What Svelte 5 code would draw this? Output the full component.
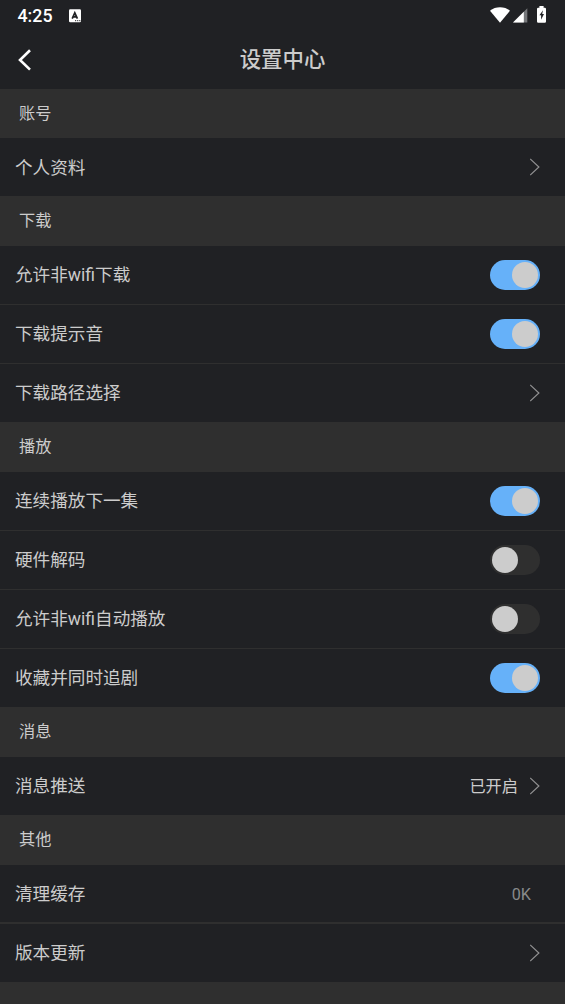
<script lang="ts">
	type Item = { label: string; on?: boolean; value?: string; link?: boolean };
	type Group = { title: string; items: Item[] };

	let groups: Group[] = $state([
		{ title: '账号', items: [{ label: '个人资料', link: true }] },
		{
			title: '下载',
			items: [
				{ label: '允许非wifi下载', on: true },
				{ label: '下载提示音', on: true },
				{ label: '下载路径选择', link: true }
			]
		},
		{
			title: '播放',
			items: [
				{ label: '连续播放下一集', on: true },
				{ label: '硬件解码', on: false },
				{ label: '允许非wifi自动播放', on: false },
				{ label: '收藏并同时追剧', on: true }
			]
		},
		{ title: '消息', items: [{ label: '消息推送', value: '已开启', link: true }] },
		{
			title: '其他',
			items: [
				{ label: '清理缓存', value: '0K' },
				{ label: '版本更新', link: true }
			]
		}
	]);
</script>

<main>
	<div class="status">
		<span class="time">4:25</span>
		<svg class="notice" width="13" height="14" viewBox="0 0 13 14">
			<rect x="0" y="0.3" width="12" height="13" rx="1.2" fill="#fff" />
			<path d="M3.2 9.6 5.8 3.8 8.4 9.6M4.2 7.8h3.2" fill="none" stroke="#202124" stroke-width="1.7" />
			<path d="M6 11.7h1.2M8.1 11.7h1.2M10.2 11.7h1.2" stroke="#202124" stroke-width="1" />
		</svg>
		<div class="signals">
			<svg width="20" height="16" viewBox="0 0 20 16">
				<path d="M0 3.7C5.6-.8 14.4-.8 20 3.7L10 15.8Z" fill="#fff" />
			</svg>
			<svg class="cell" width="15" height="15" viewBox="0 0 15 15">
				<path d="M0 14.5 14.3.3V14.5Z" fill="#75777a" />
				<path d="M0 14.5 10.8 3.8V14.5Z" fill="#fff" />
			</svg>
			<svg class="battery" width="9" height="17" viewBox="0 0 9 17">
				<path d="M2.4 0h4.2v1.8h1.2q1.2 0 1.2 1.2v12.5q0 1.2-1.2 1.2H1.2Q0 16.7 0 15.5V3Q0 1.8 1.2 1.8h1.2Z" fill="#fff" />
				<path d="M6 4.3 2.4 9.2h1.7v4.6L7 8H5.2Z" fill="#202124" />
			</svg>
		</div>
	</div>

	<header>
		<button class="back" aria-label="返回">
			<svg width="14" height="22" viewBox="0 0 14 22">
				<path d="M12 1.3 2 11l10 9.6" fill="none" stroke="#fff" stroke-width="2.6" />
			</svg>
		</button>
		<h1>设置中心</h1>
	</header>

	{#each groups as group}
		<h2>{group.title}</h2>
		<div class="group">
			{#each group.items as item}
				<div class="row">
					<span class="label">{item.label}</span>
					{#if item.value}
						<span class="value" class:muted={!item.link}>{item.value}</span>
					{/if}
					{#if item.link}
						<svg class="arrow" width="10" height="18" viewBox="0 0 10 18">
							<path d="M.2 1 8.9 9 .2 17" fill="none" stroke="#929293" stroke-width="1.15" />
						</svg>
					{:else if item.on !== undefined}
						<button
							class="switch"
							class:on={item.on}
							aria-label={item.label}
							onclick={() => (item.on = !item.on)}
						></button>
					{/if}
				</div>
			{/each}
		</div>
	{/each}
</main>

<style>
	:global(body) {
		margin: 0;
		background: #2f2f2f;
	}
	main {
		height: 1004px;
		overflow: hidden;
		background: #2f2f2f;
		color: #ccc;
		font-family: Roboto, 'Noto Sans CJK SC', sans-serif;
	}
	button {
		border: 0;
		padding: 0;
		background: none;
	}
	svg {
		display: block;
		flex: none;
	}
	.status {
		display: flex;
		align-items: center;
		height: 31px;
		padding: 0 19px 0 17.5px;
		background: #202124;
	}
	.time {
		width: 51.5px;
		color: #fff;
		font-size: 17.8px;
		font-weight: 500;
		line-height: 31px;
	}
	.signals {
		display: flex;
		align-items: center;
		margin-left: auto;
		padding-bottom: 2px;
	}
	.cell {
		margin: 2px 9px 0 3px;
	}
	header {
		display: grid;
		grid-template-columns: 60px 1fr 60px;
		align-items: center;
		height: 57.6px;
		background: #202124;
	}
	.back {
		padding-left: 18px;
		justify-self: start;
	}
	h1 {
		margin: 0;
		font-size: 21.4px;
		font-weight: 500;
		line-height: 56px;
		text-align: center;
	}
	h2 {
		height: 49.8px;
		margin: 0;
		padding-left: 19px;
		font-size: 16.2px;
		font-weight: 400;
		line-height: 50.2px;
	}
	.group {
		display: flex;
		flex-direction: column;
		gap: 1.2px;
	}
	.row {
		display: flex;
		align-items: center;
		height: 57.9px;
		padding: 0 25px 0 15px;
		background: #202124;
	}
	.label {
		flex: 1;
		padding-top: 1.6px;
		font-size: 17.6px;
		line-height: 57px;
	}
	.value {
		margin-right: 12px;
		padding-bottom: 1px;
		font-size: 16.2px;
	}
	.muted {
		margin-right: 9px;
		padding: 2px 0 0;
		color: #88898a;
	}
	.switch {
		width: 50px;
		height: 30px;
		padding: 2px;
		border-radius: 15px;
		background: #2f2f2f;
	}
	.switch::before {
		content: '';
		display: block;
		width: 26px;
		height: 26px;
		border-radius: 50%;
		background: #ccc;
	}
	.on {
		background: #66b1f9;
	}
	.on::before {
		margin-left: 20px;
	}
</style>
